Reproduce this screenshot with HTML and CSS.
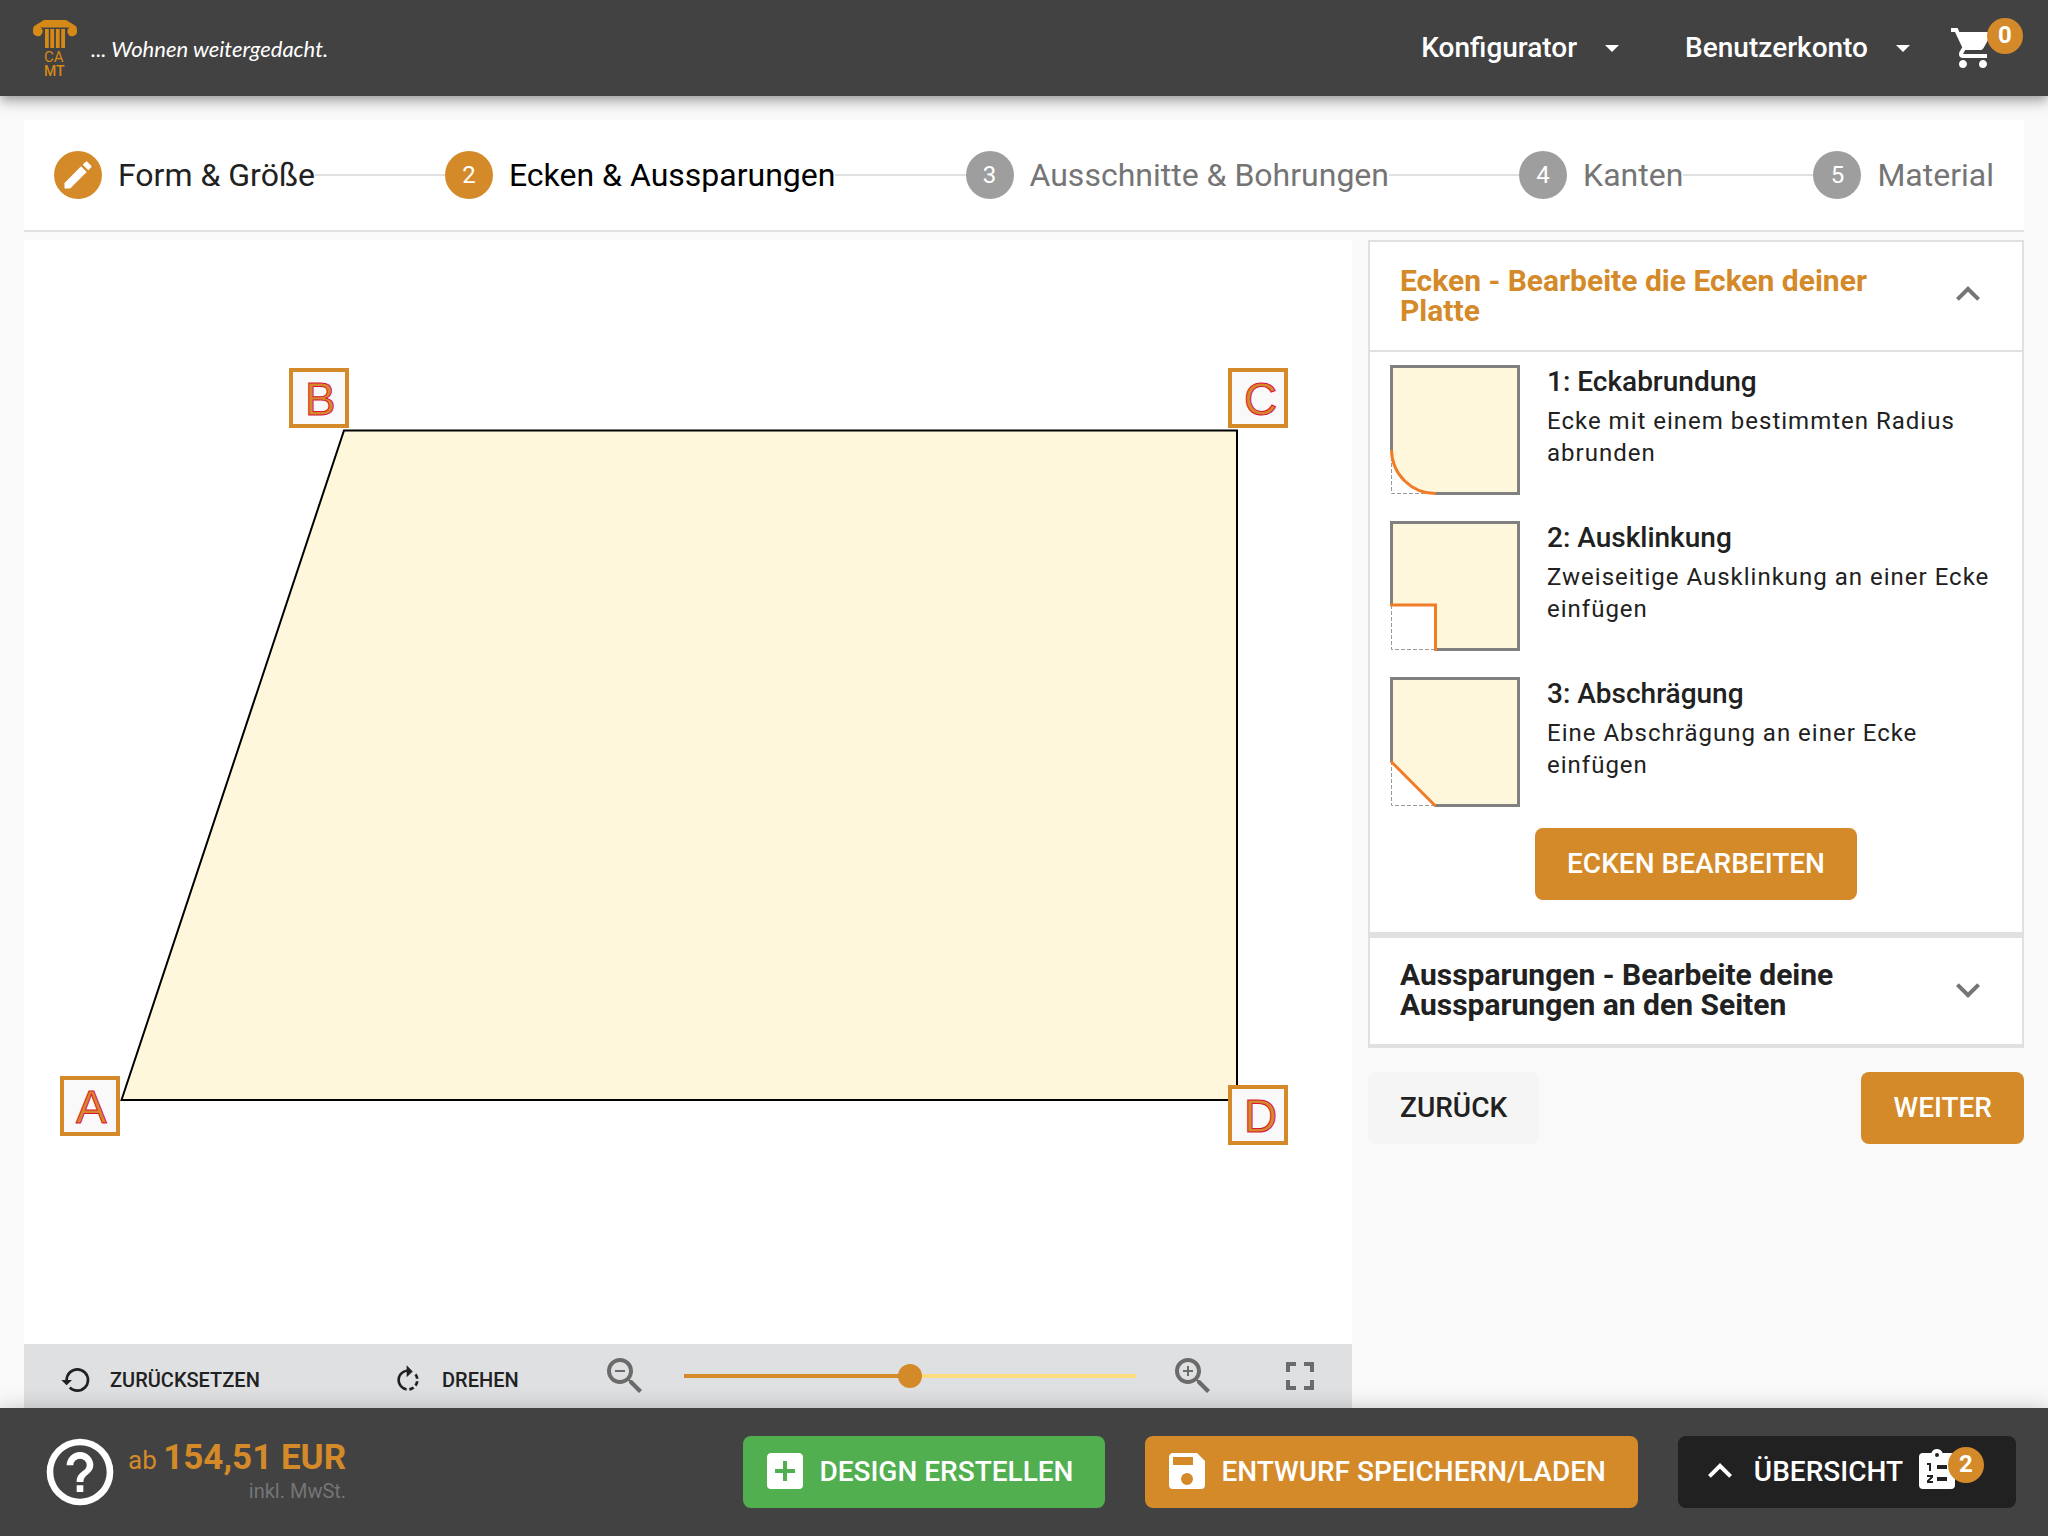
FILE: index.html
```html
<!DOCTYPE html>
<html lang="de">
<head>
<meta charset="utf-8">
<meta name="viewport" content="width=device-width, initial-scale=1">
<title>CAMT Konfigurator</title>
<link rel="stylesheet" href="styles.css">
</head>
<body>
<header class="app-bar">
  <a class="brand" href="#">
    <svg class="logo" viewBox="0 -2 44 60" role="img" aria-label="CAMT">
      <path d="M11 0H33L42 5.500C43.500 6.500 44 8 44 11A4.800 4.800 0 1 1 36.500 7.500H7.500A4.800 4.800 0 1 1 0 11C0 8 .5 6.500 2 5.500Z"/>
      <path d="M12 9H15.800V28H12ZM17.300 9H21.100V28H17.300ZM22.900 9H26.700V28H22.900ZM28.200 9H32V28H28.200Z"/>
      <text class="logo-text" x="11" y="42">CA</text>
      <text class="logo-text logo-strong" x="11" y="56">MT</text>
    </svg>
    <span class="slogan">... Wohnen weitergedacht.</span>
  </a>
  <nav class="main-nav">
    <button class="nav-item" type="button">Konfigurator <span class="caret"></span></button>
    <button class="nav-item" type="button">Benutzerkonto <span class="caret"></span></button>
    <a class="cart" href="#" aria-label="Warenkorb">
      <svg class="icon" viewBox="0 0 24 24"><path d="M17,18C15.89,18 15,18.89 15,20A2,2 0 0,0 17,22C18.11,22 19,21.11 19,20C19,18.89 18.11,18 17,18M1,2V4H3L6.6,11.59L5.24,14.04C5.09,14.32 5,14.65 5,15A2,2 0 0,0 7,17H19V15H7.42A0.25,0.25 0 0,1 7.17,14.75C7.17,14.7 7.18,14.66 7.2,14.63L8.1,13H15.55C16.3,13 16.96,12.58 17.3,11.97L20.88,5.5C20.95,5.34 21,5.17 21,5A1,1 0 0,0 20,4H5.21L4.27,2H1M7,18C5.89,18 5,18.89 5,20A2,2 0 0,0 7,22C8.11,22 9,21.11 9,20C9,18.89 8.11,18 7,18Z"/></svg>
      <span class="badge">0</span>
    </a>
  </nav>
</header>

<main class="content">
  <ol class="stepper">
    <li class="step done"><span class="dot"><svg class="pencil" viewBox="0 0 24 24"><path d="M20.71,7.04C21.1,6.65 21.1,6 20.71,5.63L18.37,3.29C18,2.9 17.35,2.9 16.96,3.29L15.12,5.12L18.87,8.87M3,17.25V21H6.75L17.81,9.93L14.06,6.18L3,17.25Z"/></svg></span><span class="label">Form &amp; Größe</span></li>
    <li class="line"></li>
    <li class="step current"><span class="dot">2</span><span class="label">Ecken &amp; Aussparungen</span></li>
    <li class="line"></li>
    <li class="step"><span class="dot">3</span><span class="label">Ausschnitte &amp; Bohrungen</span></li>
    <li class="line"></li>
    <li class="step"><span class="dot">4</span><span class="label">Kanten</span></li>
    <li class="line"></li>
    <li class="step"><span class="dot">5</span><span class="label">Material</span></li>
  </ol>

  <div class="workspace">
    <section class="editor">
      <div class="stage">
        <svg class="drawing" viewBox="0 0 1328 1104">
          <path class="plate" d="M97.500 860L320 190.500H1213V860Z"/>
          <rect class="tag" x="38" y="838" width="56" height="56"/><text class="tag-text" x="52" y="883">A</text>
          <rect class="tag" x="267" y="130" width="56" height="56"/><text class="tag-text" x="281" y="175">B</text>
          <rect class="tag" x="1206" y="130" width="56" height="56"/><text class="tag-text" x="1220" y="175">C</text>
          <rect class="tag" x="1206" y="847" width="56" height="56"/><text class="tag-text" x="1220" y="892">D</text>
        </svg>
      </div>
      <div class="toolbar">
        <div class="tool-cell"><button class="tool" type="button"><svg class="icon-small" viewBox="0 0 24 24"><path d="M13,3A9,9 0 0,0 4,12H1L4.89,15.89L4.96,16.03L9,12H6A7,7 0 0,1 13,5A7,7 0 0,1 20,12A7,7 0 0,1 13,19C11.07,19 9.32,18.21 8.06,16.94L6.64,18.36C8.27,20 10.5,21 13,21A9,9 0 0,0 22,12A9,9 0 0,0 13,3Z"/></svg>ZURÜCKSETZEN</button></div>
        <div class="tool-cell"><button class="tool" type="button"><svg class="icon-small" viewBox="0 0 24 24"><path d="M15.55 5.55L11 1v3.07C7.06 4.56 4 7.92 4 12s3.05 7.44 7 7.93v-2.02c-2.84-.48-5-2.94-5-5.91s2.16-5.43 5-5.91V10l4.55-4.45zM19.93 11c-.17-1.39-.72-2.73-1.62-3.89l-1.42 1.42c.54.75.88 1.6 1.02 2.47h2.02zM13 17.9v2.02c1.39-.17 2.74-.71 3.9-1.61l-1.44-1.44c-.75.54-1.59.89-2.46 1.03zm3.89-2.42l1.42 1.41c.9-1.16 1.45-2.5 1.62-3.89h-2.02c-.14.87-.48 1.72-1.02 2.48z"/></svg>DREHEN</button></div>
        <div class="zoom-cell">
          <button class="icon-button" type="button" aria-label="Verkleinern"><svg class="icon" viewBox="0 0 24 24"><path d="M15.5,14H14.71L14.43,13.73C15.41,12.59 16,11.11 16,9.5A6.5,6.5 0 0,0 9.5,3A6.5,6.5 0 0,0 3,9.5A6.5,6.5 0 0,0 9.5,16C11.11,16 12.59,15.41 13.73,14.43L14,14.71V15.5L19,20.5L20.5,19L15.5,14M9.5,14C7,14 5,12 5,9.5C5,7 7,5 9.5,5C12,5 14,7 14,9.5C14,12 12,14 9.5,14M7,9H12V10H7V9Z"/></svg></button>
          <input class="zoom-slider" type="range" min="0" max="100" value="50" aria-label="Zoom">
          <button class="icon-button" type="button" aria-label="Vergrößern"><svg class="icon" viewBox="0 0 24 24"><path d="M15.5,14L20.5,19L19,20.5L14,15.5V14.71L13.73,14.43C12.59,15.41 11.11,16 9.5,16A6.5,6.5 0 0,1 3,9.5A6.5,6.5 0 0,1 9.5,3A6.5,6.5 0 0,1 16,9.5C16,11.11 15.41,12.59 14.43,13.73L14.71,14H15.5M9.5,14C12,14 14,12 14,9.5C14,7 12,5 9.5,5C7,5 5,7 5,9.5C5,12 7,14 9.5,14M12,10H10V12H9V10H7V9H9V7H10V9H12V10Z"/></svg></button>
          <button class="icon-button fullscreen" type="button" aria-label="Vollbild"><svg class="icon" viewBox="0 0 24 24"><path d="M5,5H10V7H7V10H5V5M14,5H19V10H17V7H14V5M17,14H19V19H14V17H17V14M10,17V19H5V14H7V17H10Z"/></svg></button>
        </div>
      </div>
    </section>

    <aside class="side">
      <div class="panels">
        <section class="panel open">
          <button class="panel-head" type="button" aria-expanded="true"><span>Ecken - Bearbeite die Ecken deiner Platte</span><svg class="icon" viewBox="0 0 24 24"><path d="M7.41,15.41L12,10.83L16.59,15.41L18,14L12,8L6,14L7.41,15.41Z"/></svg></button>
          <div class="panel-body">
            <ul class="options">
              <li class="option">
                <svg class="thumb" viewBox="0 0 130 130"><path class="ghost" d="M1.500 86V128.500H46"/><path class="face" d="M1.500 86V1.500H128.500V128.500H46A44 44 0 0 1 1.500 86Z"/><path class="edge" d="M1.500 85V1.500H128.500V128.500H46"/><path class="cut" d="M1.500 85A44 44 0 0 0 46 128.500"/></svg>
                <div><h3 class="option-title">1: Eckabrundung</h3><p class="option-text">Ecke mit einem bestimmten Radius abrunden</p></div>
              </li>
              <li class="option">
                <svg class="thumb" viewBox="0 0 130 130"><path class="ghost" d="M1.500 84V128.500H46"/><path class="face" d="M1.500 84V1.500H128.500V128.500H46V84Z"/><path class="edge" d="M1.500 84V1.500H128.500V128.500H46"/><path class="cut" d="M0 84H45.500V130"/></svg>
                <div><h3 class="option-title">2: Ausklinkung</h3><p class="option-text">Zweiseitige Ausklinkung an einer Ecke einfügen</p></div>
              </li>
              <li class="option">
                <svg class="thumb" viewBox="0 0 130 130"><path class="ghost" d="M1.500 84V128.500H46"/><path class="face" d="M1.500 85V1.500H128.500V128.500H45Z"/><path class="edge" d="M1.500 85V1.500H128.500V128.500H45"/><path class="cut" d="M1 84.500L45.500 129"/></svg>
                <div><h3 class="option-title">3: Abschrägung</h3><p class="option-text">Eine Abschrägung an einer Ecke einfügen</p></div>
              </li>
            </ul>
            <button class="btn primary" type="button">ECKEN BEARBEITEN</button>
          </div>
        </section>
        <section class="panel">
          <button class="panel-head" type="button" aria-expanded="false"><span>Aussparungen - Bearbeite deine Aussparungen an den Seiten</span><svg class="icon" viewBox="0 0 24 24"><path d="M7.41,8.58L12,13.17L16.59,8.58L18,10L12,16L6,10L7.41,8.58Z"/></svg></button>
        </section>
      </div>
      <div class="actions">
        <button class="btn plain" type="button">ZURÜCK</button>
        <button class="btn primary" type="button">WEITER</button>
      </div>
    </aside>
  </div>
</main>

<footer class="bottom-bar">
  <button class="help" type="button" aria-label="Hilfe"><svg viewBox="0 0 24 24"><path d="M11,18H13V16H11V18M12,2A10,10 0 0,0 2,12A10,10 0 0,0 12,22A10,10 0 0,0 22,12A10,10 0 0,0 12,2M12,20C7.59,20 4,16.41 4,12C4,7.59 7.59,4 12,4C16.41,4 20,7.59 20,12C20,16.41 16.41,20 12,20M12,6A4,4 0 0,0 8,10H10A2,2 0 0,1 12,8A2,2 0 0,1 14,10C14,12 11,11.75 11,15H13C13,12.75 16,12.5 16,10A4,4 0 0,0 12,6Z"/></svg></button>
  <div class="price">
    <div class="amount">ab <strong>154,51 EUR</strong></div>
    <div class="tax">inkl. MwSt.</div>
  </div>
  <div class="bottom-actions">
    <button class="btn success with-icon" type="button"><svg class="icon" viewBox="0 0 24 24"><path d="M17,13H13V17H11V13H7V11H11V7H13V11H17M19,3H5C3.89,3 3,3.89 3,5V19A2,2 0 0,0 5,21H19A2,2 0 0,0 21,19V5C21,3.89 20.1,3 19,3Z"/></svg>DESIGN ERSTELLEN</button>
    <button class="btn primary with-icon" type="button"><svg class="icon" viewBox="0 0 24 24"><path d="M15,9H5V5H15M12,19A3,3 0 0,1 9,16A3,3 0 0,1 12,13A3,3 0 0,1 15,16A3,3 0 0,1 12,19M17,3H5C3.89,3 3,3.9 3,5V19A2,2 0 0,0 5,21H19A2,2 0 0,0 21,19V7L17,3Z"/></svg>ENTWURF SPEICHERN/LADEN</button>
    <button class="btn dark with-icon" type="button"><svg class="icon" viewBox="0 0 24 24"><path d="M7.41,15.41L12,10.83L16.59,15.41L18,14L12,8L6,14L7.41,15.41Z"/></svg>ÜBERSICHT
      <span class="list-icon"><svg class="icon" viewBox="0 0 24 24"><path fill-rule="evenodd" d="M19,3H14.800C14.400,1.800 13.300,1 12,1S9.600,1.800 9.200,3H5A2,2 0 0,0 3,5V19A2,2 0 0,0 5,21H19A2,2 0 0,0 21,19V5A2,2 0 0,0 19,3ZM12,3A1,1 0 1,1 12,5A1,1 0 1,1 12,3ZM7,8H9V12H8V9H7ZM12,9H17V11H12ZM7,14H10V15.200L8.200,17H10V18H7V16.800L8.800,15H7ZM12,15H17V17H12Z"/></svg><span class="badge">2</span></span></button>
  </div>
</footer>
</body>
</html>
```
FILE: styles.css
```css
:root {
  --orange: #d48a29;
  --bar: #424242;
  --line: #e0e0e0;
  --ink: #212121;
}

* { box-sizing: border-box; }

body {
  margin: 0;
  min-height: 100vh;
  display: flex;
  flex-direction: column;
  background: #f9f9f9;
  color: var(--ink);
  font-family: Roboto, "Liberation Sans", sans-serif;
}

button {
  margin: 0;
  padding: 0;
  border: 0;
  background: none;
  color: inherit;
  font: inherit;
}

svg { display: block; fill: currentColor; flex: none; }
.icon { width: 48px; height: 48px; }
.icon-small { width: 32px; height: 32px; }

.badge {
  position: absolute;
  height: 36px;
  min-width: 36px;
  border-radius: 18px;
  background: var(--orange);
  color: #fff;
  font-size: 24px;
  font-weight: 700;
  line-height: 34px;
  text-align: center;
}

/* Top bar */
.app-bar {
  display: flex;
  align-items: center;
  justify-content: space-between;
  height: 96px;
  padding: 0 51px 0 33px;
  background: var(--bar);
  color: #fff;
  box-shadow: 0 4px 8px -2px rgba(0, 0, 0, .2), 0 8px 10px rgba(0, 0, 0, .14), 0 2px 20px rgba(0, 0, 0, .12);
  z-index: 1;
}
.brand { display: flex; align-items: center; gap: 14px; color: inherit; text-decoration: none; }
.logo { width: 44px; height: 60px; color: #d58917; overflow: visible; }
.logo-text { font: 15px Roboto, sans-serif; }
.logo-strong { font-weight: 500; font-size: 14px; }
.slogan { font: italic 22px/28px Lato, sans-serif; padding-top: 2px; }
.main-nav { display: flex; align-items: center; }
.nav-item { display: flex; align-items: center; gap: 28px; margin-right: 66px; font-size: 28px; font-weight: 500; line-height: 40px; }
.nav-item + .nav-item { margin-right: 39px; }
.caret { border: 7px solid transparent; border-top-color: #fff; border-bottom: 0; }
.cart { position: relative; color: inherit; text-decoration: none; }
.cart .badge { top: -6px; right: -26px; }

/* Page */
.content { flex: 1; display: flex; flex-direction: column; padding: 24px 16px 0; }

.stepper {
  display: flex;
  align-items: center;
  height: 112px;
  margin: 0 8px 8px;
  padding: 0 30px;
  border-bottom: 2px solid var(--line);
  background: #fff;
  list-style: none;
}
.step { display: flex; align-items: center; gap: 16px; color: #757575; font-size: 32px; line-height: 40px; white-space: nowrap; }
.dot {
  display: flex;
  align-items: center;
  justify-content: center;
  width: 48px;
  height: 48px;
  border-radius: 50%;
  background: #9e9e9e;
  color: #fff;
  font-size: 24px;
}
.done .dot, .current .dot { background: var(--orange); }
.done { color: var(--ink); }
.current { color: #000; }
.pencil { width: 36px; height: 36px; }
.line { flex: 1; height: 2px; background: var(--line); }

.workspace { flex: 1; display: grid; grid-template-columns: 2fr 1fr; }
.editor { display: flex; flex-direction: column; margin: 0 8px; background: #fff; }
.stage { flex: 1; }
.drawing { width: 100%; height: auto; }
.plate { fill: #fff7dc; stroke: #000; stroke-width: 2; }
.tag { fill: #f9f9f9; stroke: var(--orange); stroke-width: 4; }
.tag-text { fill: var(--orange); stroke: crimson; stroke-width: 1; font: 46px "Liberation Sans", Arial, sans-serif; }

.toolbar { display: grid; grid-template-columns: 3fr 2fr 7fr; height: 64px; background: #dfe0e2; }
.tool-cell { display: flex; align-items: center; padding: 8px 0 0 36px; }
.tool { display: flex; align-items: center; gap: 18px; font-size: 20px; font-weight: 500; line-height: 32px; }
.zoom-cell { display: flex; align-items: center; padding: 0 28px 0 24px; color: #6b6b6b; }
.fullscreen { margin-left: 59px; }
.zoom-slider {
  flex: 1;
  min-width: 0;
  height: 24px;
  margin: 0 33px 0 35px;
  appearance: none;
  background: linear-gradient(90deg, var(--orange) 50%, #ffdc7c 50%) center / 100% 4px no-repeat;
}
.zoom-slider::-webkit-slider-thumb { appearance: none; width: 24px; height: 24px; border-radius: 50%; background: var(--orange); }
.zoom-slider::-moz-range-thumb { width: 24px; height: 24px; border: 0; border-radius: 50%; background: var(--orange); }

/* Side column */
.side { margin: 0 8px; }
.panels { border: 2px solid var(--line); border-bottom-width: 4px; background: #fff; }
.panel.open { border-bottom: 6px solid #dfe0e2; }
.panel-head {
  display: flex;
  align-items: flex-start;
  justify-content: space-between;
  width: 100%;
  padding: 22px 30px 24px;
  font-size: 30px;
  font-weight: 700;
  line-height: 30px;
  text-align: left;
}
.panel-head .icon { margin-top: 6px; color: #757575; }
.open .panel-head { padding-top: 24px; border-bottom: 2px solid var(--line); color: var(--orange); }
.open .panel-head .icon { margin-top: 4px; }
.panel-body { display: flex; flex-direction: column; align-items: center; gap: 21px; padding: 13px 20px 32px; }
.options { display: flex; flex-direction: column; align-self: stretch; gap: 26px; margin: 0; padding: 0; list-style: none; }
.option { display: flex; gap: 27px; }
.thumb { width: 130px; height: 130px; fill: none; }
.face { fill: #fff7dc; }
.edge { stroke: #808080; stroke-width: 3; }
.cut { stroke: #f07c28; stroke-width: 3; }
.ghost { stroke: #999; stroke-width: 1; stroke-dasharray: 4 2; }
.option-title { margin: 0 0 6px; font-size: 28px; font-weight: 500; line-height: 34px; }
.option-text { margin: 0; font-size: 24px; line-height: 32px; letter-spacing: 1px; }

.btn { height: 72px; padding: 0 32px 2px; border-radius: 8px; font-size: 28px; font-weight: 500; white-space: nowrap; }
.primary { background: var(--orange); color: #fff; }
.plain { background: #f5f5f5; }
.success { background: #52af50; color: #fff; }
.dark { background: var(--ink); color: #fff; }
.actions { display: flex; justify-content: space-between; padding-top: 24px; }

/* Bottom bar */
.bottom-bar {
  display: flex;
  align-items: center;
  height: 128px;
  padding: 0 32px 0 40px;
  background: var(--bar);
  box-shadow: 0 0 20px rgba(0, 0, 0, .2);
  z-index: 1;
}
.help { color: #fff; }
.help svg { width: 80px; height: 80px; }
.price { padding: 0 0 4px 8px; text-align: right; }
.amount { color: var(--orange); font-size: 26px; line-height: 40px; }
.amount strong { font-size: 35px; font-weight: 700; }
.tax { color: #757575; font-size: 20px; line-height: 22px; }
.bottom-actions { display: flex; gap: 40px; margin-left: auto; }
.with-icon { display: flex; align-items: center; gap: 10px; padding-left: 18px; }
.list-icon { position: relative; margin-right: 23px; }
.list-icon .badge { top: 0; right: -23px; }
```
